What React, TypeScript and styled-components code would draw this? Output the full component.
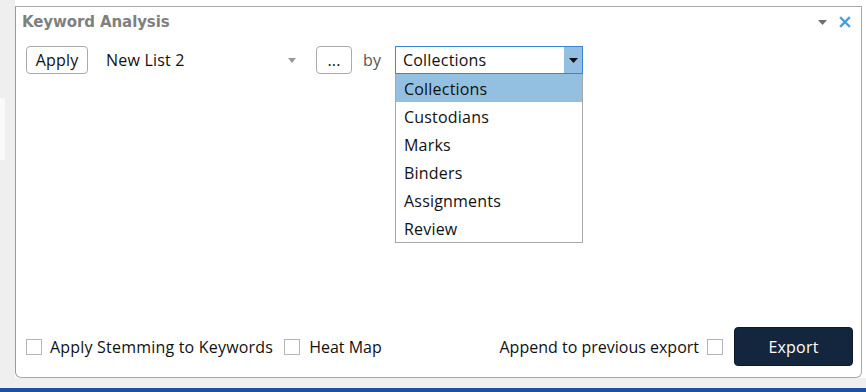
import React from "react";
import styled, { createGlobalStyle } from "styled-components";

const Global = createGlobalStyle`
  html, body { margin: 0; padding: 0; background: #fff; }
  body { font-family: "Open Sans", "DejaVu Sans", sans-serif; }
  * { box-sizing: border-box; }
`;

const Page = styled.div`
  width: 866px;
  height: 392px;
  display: flex;
  flex-direction: column;
  overflow: hidden;
  background: #fff;
`;

const Main = styled.div`
  flex: 1;
  display: flex;
  min-height: 0;
`;

const Rail = styled.div`
  width: 15px;
  background: #efefef;
  display: flex;
  flex-direction: column;
  padding-top: 98px;
`;

const RailNotch = styled.div`
  width: 5px;
  height: 62px;
  background: #fafafa;
`;

const PanelWrap = styled.div`
  flex: 1;
  padding: 6px 4px 0 0;
  display: flex;
  flex-direction: column;
`;

const Panel = styled.section`
  flex: 1;
  border: 1px solid #a8a8a8;
  border-left-color: #9a9a9a;
  border-radius: 0 0 6px 6px;
  display: flex;
  flex-direction: column;
  padding: 0 8px 11px 10px;
  position: relative;
`;

const TitleBar = styled.div`
  height: 30px;
  display: flex;
  align-items: center;
  margin-left: -4px;
`;

const Title = styled.h2`
  margin: 0;
  font-family: "DejaVu Sans", sans-serif;
  font-weight: bold;
  font-size: 15px;
  color: #7f7f7f;
  letter-spacing: -0.1px;
  flex: 1;
`;

const TitleIcons = styled.div`
  display: flex;
  align-items: center;
  gap: 12px;
  margin-right: 2px;
`;

const Text = `
  font-family: "Open Sans", sans-serif;
  font-size: 16px;
  letter-spacing: 0.2px;
`;

const Toolbar = styled.div`
  display: flex;
  align-items: center;
  margin-top: 9px;
  height: 28px;
`;

const Button = styled.button<{ $w: number }>`
  width: ${(p) => p.$w}px;
  height: 28px;
  border: 1px solid #ababab;
  border-radius: 4px;
  background: #fff;
  ${Text}
  color: #111;
  padding: 0;
  display: flex;
  align-items: center;
  justify-content: center;
`;

const Combo = styled.div`
  width: 194px;
  margin-left: 18px;
  margin-right: 16px;
  display: flex;
  align-items: center;
  justify-content: space-between;
  ${Text}
  color: #111;
  padding-right: 4px;
`;

const ByLabel = styled.span`
  width: 32px;
  margin-left: 11px;
  ${Text}
  color: #555;
`;

const SelectWrap = styled.div`
  position: relative;
  width: 188px;
  height: 28px;
`;

const SelectBox = styled.div`
  height: 28px;
  border: 1px solid #3a86d4;
  display: flex;
  align-items: stretch;
  background: #fff;
`;

const SelectValue = styled.span`
  flex: 1;
  display: flex;
  align-items: center;
  padding-left: 7px;
  ${Text}
  color: #111;
`;

const SelectArrow = styled.span`
  width: 18px;
  background: #93bfe0;
  display: flex;
  align-items: center;
  justify-content: center;
`;

const List = styled.ul`
  position: absolute;
  left: 0;
  top: 28px;
  width: 188px;
  margin: 0;
  padding: 0;
  list-style: none;
  border: 1px solid #a9a9a9;
  border-top: none;
  background: #fff;
  z-index: 2;
`;

const Item = styled.li<{ $active?: boolean }>`
  height: 28px;
  display: flex;
  align-items: center;
  padding: 2px 0 0 8px;
  ${Text}
  color: #111;
  background: ${(p) => (p.$active ? "#93bfe0" : "#fff")};
`;

const Spacer = styled.div`
  flex: 1;
`;

const Footer = styled.div`
  display: flex;
  align-items: center;
  height: 39px;
`;

const Check = styled.span<{ $ml?: number; $mr?: number }>`
  width: 16px;
  height: 16px;
  border: 1px solid #b5b5b5;
  background: #fff;
  margin-left: ${(p) => p.$ml ?? 0}px;
  margin-right: ${(p) => p.$mr ?? 0}px;
  flex: none;
`;

const Label = styled.span<{ $tight?: boolean }>`
  ${Text}
  letter-spacing: ${(p) => (p.$tight ? "0" : "0.2px")};
  color: #111;
`;

const ExportButton = styled.button`
  width: 119px;
  height: 39px;
  border: 1px solid #0d1a2a;
  border-radius: 4px;
  background: #14263d;
  color: #fff;
  ${Text}
  margin-left: 11px;
`;

const GrayStrip = styled.div`
  height: 10px;
  background: #efefef;
`;

const BlueBar = styled.div`
  height: 4px;
  background: #1b52a0;
`;

const options = ["Collections", "Custodians", "Marks", "Binders", "Assignments", "Review"];

export default function App() {
  return (
    <Page>
      <Global />
      <Main>
        <Rail>
          <RailNotch />
        </Rail>
        <PanelWrap>
          <Panel>
            <TitleBar>
              <Title>Keyword Analysis</Title>
              <TitleIcons>
                <svg width="9" height="5" viewBox="0 0 9 5">
                  <path d="M0 0h9L4.5 5z" fill="#6e6e6e" />
                </svg>
                <svg width="12" height="12" viewBox="0 0 12 12">
                  <path d="M2 2l8 8M10 2l-8 8" stroke="#4a9de0" strokeWidth="2.4" strokeLinecap="square" />
                </svg>
              </TitleIcons>
            </TitleBar>
            <Toolbar>
              <Button $w={62}>Apply</Button>
              <Combo>
                <span>New List 2</span>
                <svg width="8" height="5" viewBox="0 0 8 5">
                  <path d="M0 0h8L4 5z" fill="#9a9a9a" />
                </svg>
              </Combo>
              <Button $w={36}>...</Button>
              <ByLabel>by</ByLabel>
              <SelectWrap>
                <SelectBox>
                  <SelectValue>Collections</SelectValue>
                  <SelectArrow>
                    <svg width="9" height="5" viewBox="0 0 9 5">
                      <path d="M0 0h9L4.5 5z" fill="#111" />
                    </svg>
                  </SelectArrow>
                </SelectBox>
                <List>
                  {options.map((o, i) => (
                    <Item key={o} $active={i === 0}>
                      {o}
                    </Item>
                  ))}
                </List>
              </SelectWrap>
            </Toolbar>
            <Spacer />
            <Footer>
              <Check $mr={8} />
              <Label>Apply Stemming to Keywords</Label>
              <Check $ml={11} $mr={9} />
              <Label $tight>Heat Map</Label>
              <Spacer />
              <Label $tight>Append to previous export</Label>
              <Check $ml={8} />
              <ExportButton>Export</ExportButton>
            </Footer>
          </Panel>
        </PanelWrap>
      </Main>
      <GrayStrip />
      <BlueBar />
    </Page>
  );
}
